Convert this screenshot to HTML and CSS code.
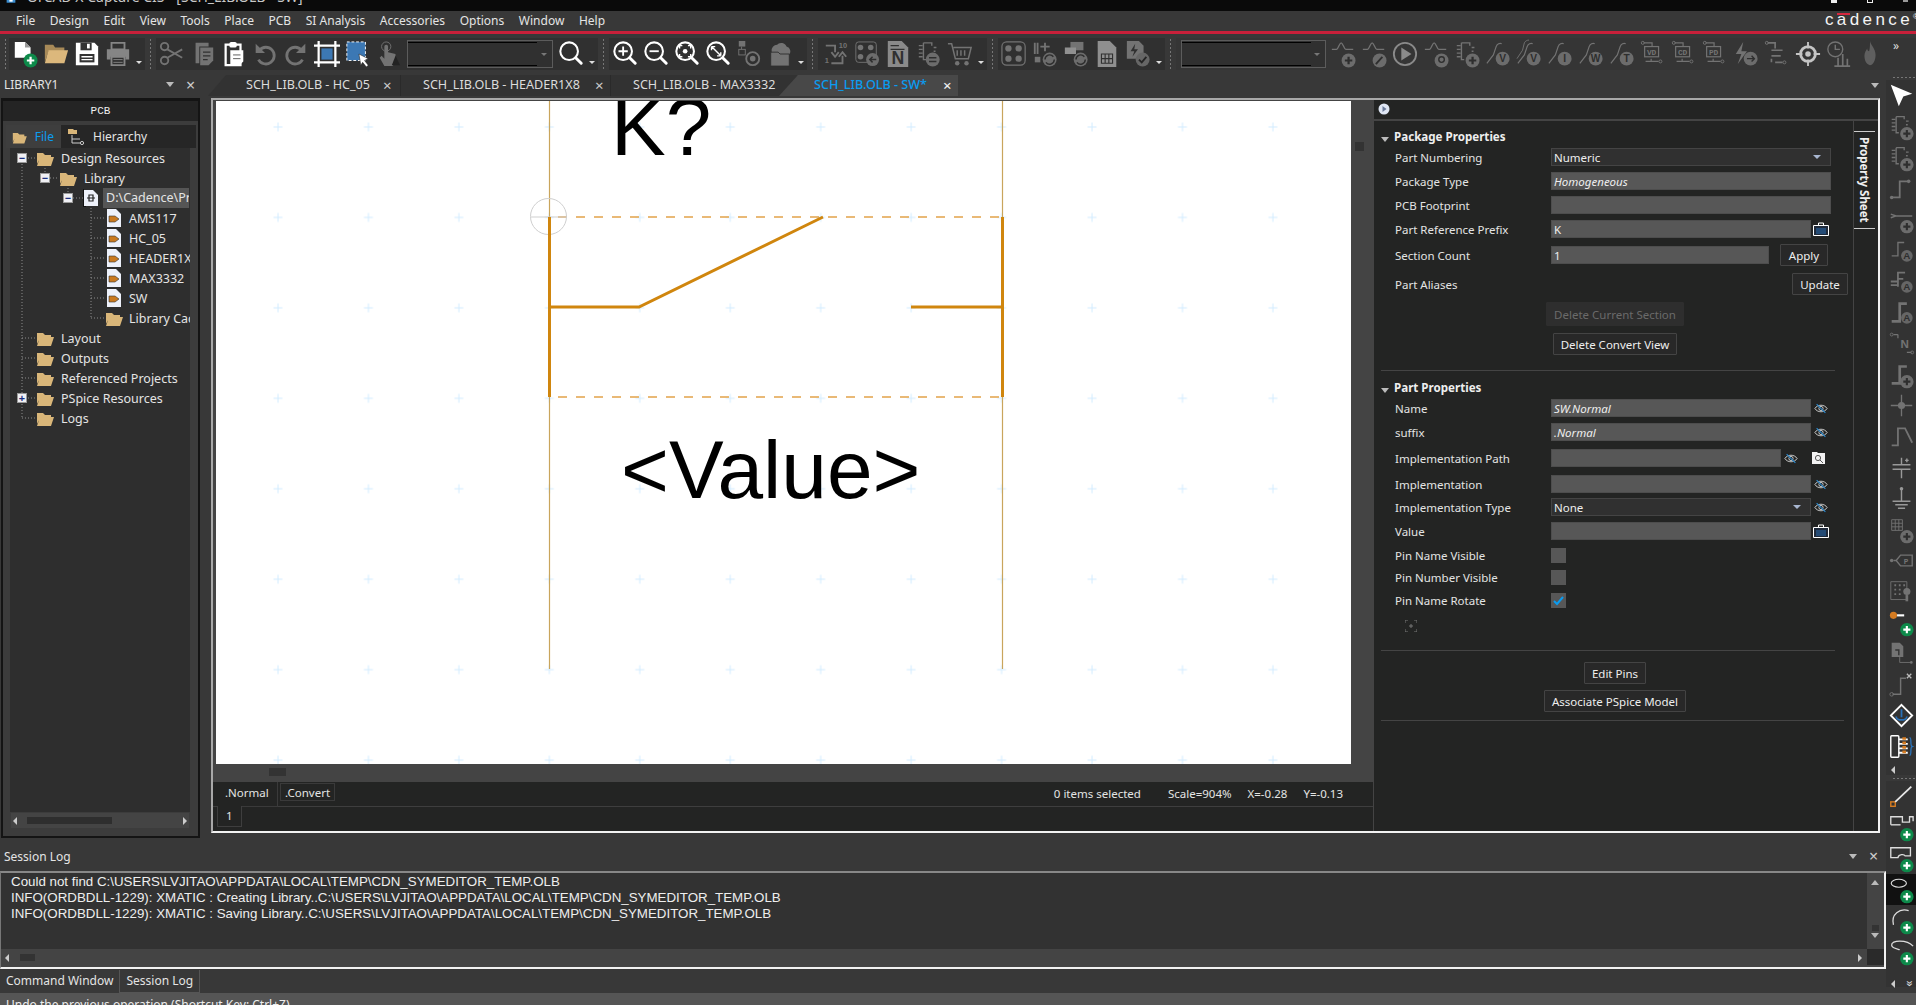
FILE: index.html
```html
<!DOCTYPE html>
<html lang="en">
<head>
<meta charset="UTF-8">
<title>OrCAD X Capture CIS - [SCH_LIB.OLB - SW]</title>
<link rel="stylesheet" href="styles.css">
</head>
<body>

<svg class="defs" width="0" height="0">
  <defs>
    <g id="b-green"><circle cx="20" cy="22" r="7.5" fill="#0d8a4a"/><path d="M20 18v8M16 22h8" stroke="#fff" stroke-width="2.4"/></g>
    <g id="b-gray"><circle cx="20" cy="22" r="7.5" fill="#6c6c6c"/><path d="M20 18v8M16 22h8" stroke="#2e2e2e" stroke-width="2.4"/></g>
    <g id="b-circle"><circle cx="20" cy="22" r="7.5" fill="#6c6c6c"/></g>
    <path id="wave" d="M2 10h5c2 0 3-7 5-7s3 7 5 7h8" fill="none" stroke="currentColor" stroke-width="1.4"/>
    <path id="probe" d="M2 25l7-9 3-9c1-3 4-4 6-3" fill="none" stroke="currentColor" stroke-width="1.3"/>
    <path id="chip" d="M8 3h9v3M8 3v18h3M3 6h4M3 10h4M3 14h4M3 18h4M19 8h3M19 12h2" fill="none" stroke="currentColor" stroke-width="1.5"/>
    <g id="lens"><circle cx="12" cy="12" r="9.5" fill="none" stroke="currentColor" stroke-width="2.2"/><path d="M19 19l6 6" stroke="currentColor" stroke-width="3.2" stroke-linecap="round"/></g>
    <path id="folder" d="M1 4h6l2 2h6v3H4L1 15zM4 8h14l-3 9H1z" fill="#d9b679"/>
    <g id="vd-box"><path d="M4 3h5M9 3h4v4M6 23h6v-3M12 23h8" fill="none" stroke="currentColor" stroke-width="1.3"/><circle cx="3" cy="3" r="1.6" fill="none" stroke="currentColor"/><circle cx="22" cy="23" r="1.6" fill="none" stroke="currentColor"/><rect x="5" y="7" width="15" height="11" fill="none" stroke="currentColor" stroke-width="1.3"/></g>
    <pattern id="gridmark" x="274" y="121" width="90.45" height="90.45" patternUnits="userSpaceOnUse">
      <path d="M5 .5v9M.5 5h9" stroke="#d2ecff" stroke-width="1"/>
    </pattern>
  </defs>
</svg>

<div class="app">
  <div class="titlebar">
    <svg class="title-icon" viewBox="0 0 16 11"><rect x="0" y="0" width="16" height="5" fill="#3b8ed0"/><rect x="5" y="0" width="6" height="3" fill="#fff"/></svg>
    <span class="title-text">OrCAD X Capture CIS - [SCH_LIB.OLB - SW]</span>
    <span class="win-btns"><i class="win-min"></i><i class="win-max"></i><i class="win-close"></i></span>
  </div>

  <div class="menubar">
    <span>File</span><span>Design</span><span>Edit</span><span>View</span><span>Tools</span><span>Place</span><span>PCB</span><span>SI Analysis</span><span>Accessories</span><span>Options</span><span>Window</span><span>Help</span>
    <span class="logo">c<b>a</b>dence<sup>®</sup></span>
  </div>

  <div class="toolbar">
    <i class="grip first"></i>
    <div class="tb-group">
      <span class="tb on"><svg viewBox="0 0 28 30"><path d="M3 2h11l6 6v11H3z" fill="#fff"/><path d="M14 2v6h6" fill="#999"/><use href="#b-green"/></svg></span>
      <span class="tb on"><svg viewBox="0 0 28 30"><path d="M2 5h9l2 3h10v4H6L2 24z" fill="#a88a58"/><path d="M6 11h21l-4 14H2z" fill="#dcb87c"/></svg></span>
      <span class="tb on"><svg viewBox="0 0 28 30"><path d="M2 3h20l4 4v20H2z" fill="#fff"/><rect x="7" y="3" width="12" height="8" fill="#333"/><rect x="14" y="4" width="3" height="5" fill="#fff"/><rect x="6" y="15" width="16" height="9" fill="#333"/><path d="M8 18h12M8 21h12" stroke="#fff" stroke-width="1.5"/></svg></span>
      <span class="tb off"><svg viewBox="0 0 28 30"><path d="M7 3h14v7H7z" fill="none" stroke="#858585" stroke-width="2"/><path d="M2 10h24v11h-4v-3H6v3H2z" fill="#858585"/><path d="M7 18h14v9H7z" fill="none" stroke="#858585" stroke-width="2"/><path d="M9 21h10M9 24h10" stroke="#858585"/></svg></span>
      <span class="dd"></span>
    </div>
    <i class="grip"></i>
    <div class="tb-group">
      <span class="tb off"><svg viewBox="0 0 28 30"><circle cx="6" cy="7" r="4" fill="none" stroke="currentColor" stroke-width="2"/><circle cx="6" cy="22" r="4" fill="none" stroke="currentColor" stroke-width="2"/><path d="M9 10l16 9M9 19l16-9" stroke="currentColor" stroke-width="2"/></svg></span>
      <span class="tb off"><svg viewBox="0 0 28 30"><path d="M6 3h14v4H10v18H6z" fill="currentColor"/><path d="M11 8h14v14l-5 5h-9z" fill="currentColor"/><path d="M14 13h8M14 17h8M14 21h5" stroke="#303030" stroke-width="1.5"/></svg></span>
      <span class="tb on"><svg viewBox="0 0 28 30"><path d="M5 5h16v22H5z" fill="none" stroke="#fff" stroke-width="2.4"/><rect x="9" y="2" width="8" height="6" rx="2" fill="#fff"/><path d="M10 11h14v12l-5 5h-9z" fill="#fff"/><path d="M13 16h8M13 20h8" stroke="#555"/></svg></span>
      <span class="tb off"><svg viewBox="0 0 28 30"><path d="M8 11a9 9 0 1 1 -1 10" fill="none" stroke="currentColor" stroke-width="3"/><path d="M4 4v10h10z" fill="currentColor"/></svg></span>
      <span class="tb off"><svg viewBox="0 0 28 30"><path d="M20 11a9 9 0 1 0 1 10" fill="none" stroke="currentColor" stroke-width="3"/><path d="M24 4v10H14z" fill="currentColor"/></svg></span>
      <span class="tb on"><svg viewBox="0 0 28 30"><path d="M5 1v28M23 1v28M0 6h28M0 24h28" stroke="#fff" stroke-width="2.4"/><rect x="8" y="9" width="12" height="12" fill="#3c78b4"/></svg></span>
      <span class="tb on"><svg viewBox="0 0 28 30"><rect x="2" y="2" width="20" height="20" fill="#3c78b4" stroke="#fff" stroke-dasharray="3 2"/><path d="M15 15l10 5-4 2 4 5-2 2-4-5-2 3z" fill="#fff" stroke="#222" stroke-width=".6"/></svg></span>
      <span class="tb off"><svg viewBox="0 0 28 30"><path d="M9 14V7a2 2 0 0 1 4 0v6l8 2v8l-3 5H9l-5-9 2-2 3 3z" fill="currentColor"/><circle cx="11" cy="7" r="5" fill="none" stroke="currentColor"/><path d="M21 17l5 10H17z" fill="#222"/></svg></span>
      <span class="combo"><i></i></span>
      <span class="tb on"><svg viewBox="0 0 28 30"><use href="#lens"/></svg></span>
      <span class="dd"></span>
    </div>
    <i class="grip"></i>
    <div class="tb-group">
      <span class="tb on"><svg viewBox="0 0 28 30"><use href="#lens"/><path d="M12 7v10M7 12h10" stroke="#fff" stroke-width="2"/></svg></span>
      <span class="tb on"><svg viewBox="0 0 28 30"><use href="#lens"/><path d="M7 12h10" stroke="#fff" stroke-width="2"/></svg></span>
      <span class="tb on"><svg viewBox="0 0 28 30"><use href="#lens"/><path d="M6 9V6h3M15 6h3v3M18 15v3h-3M9 18H6v-3" fill="none" stroke="#fff" stroke-width="1.5"/><circle cx="12" cy="12" r="2.5" fill="#fff"/></svg></span>
      <span class="tb on"><svg viewBox="0 0 28 30"><use href="#lens"/><path d="M7 7l10 10M7 7h4M7 7v4M17 17h-4M17 17v-4" fill="none" stroke="#fff" stroke-width="1.5"/></svg></span>
      <span class="tb off"><svg viewBox="0 0 28 30"><rect x="3" y="1" width="7" height="6" fill="currentColor"/><rect x="3" y="10" width="7" height="6" fill="none" stroke="currentColor"/><path d="M6 7v3" stroke="currentColor"/><circle cx="18" cy="20" r="7" fill="none" stroke="currentColor" stroke-width="2"/><circle cx="18" cy="20" r="3" fill="currentColor"/></svg></span>
      <span class="tb off"><svg viewBox="0 0 28 30"><path d="M5 12a6 6 0 0 1 6-7 6 6 0 0 1 10 2 5 5 0 0 1 2 9H5z" fill="currentColor"/><path d="M4 13h8l2 2h10v13H4z" fill="currentColor" stroke="#303030"/></svg></span>
      <span class="dd"></span>
    </div>
    <i class="grip"></i>
    <div class="tb-group pad2">
      <span class="tb off"><svg viewBox="0 0 28 30"><path d="M3 6h10v7M9 13l4 5 4-5M9 25h12v-8M17 18l4-5 4 5" fill="none" stroke="currentColor" stroke-width="2"/><text x="17" y="9" class="svg-num">10</text><text x="2" y="25" class="svg-num">1</text></svg></span>
      <span class="tb off"><svg viewBox="0 0 28 30"><rect x="2" y="2" width="22" height="22" rx="3" fill="none" stroke="currentColor"/><circle cx="7" cy="8" r="3" fill="currentColor"/><circle cx="18" cy="8" r="3" fill="currentColor"/><circle cx="7" cy="18" r="3" fill="currentColor"/><circle cx="20" cy="21" r="7" fill="#6c6c6c"/><path d="M24 21h-7m3-3l-3 3 3 3" fill="none" stroke="#2e2e2e" stroke-width="1.6"/></svg></span>
      <span class="tb off"><svg viewBox="0 0 28 30"><path d="M3 1h15l7 7v21H3z" fill="#8a8a8a"/><text x="7" y="26" class="svg-big">N</text><path d="M6 6h9M6 10h15" stroke="#303030" stroke-width="1.5"/></svg></span>
      <span class="tb off"><svg viewBox="0 0 28 30"><use href="#chip"/><circle cx="18" cy="21" r="7.5" fill="#6c6c6c"/><path d="M14 19h8M22 23h-8" stroke="#2e2e2e" stroke-width="1.6"/></svg></span>
      <span class="tb off"><svg viewBox="0 0 28 30"><path d="M1 4h4l4 16h14l3-12H7" fill="none" stroke="currentColor" stroke-width="1.6"/><path d="M11 11v6M15 11v6M19 11v6" stroke="currentColor" stroke-width="1.6"/><circle cx="11" cy="25" r="2.4" fill="currentColor"/><circle cx="21" cy="25" r="2.4" fill="currentColor"/></svg></span>
      <span class="dd"></span>
    </div>
    <i class="grip"></i>
    <div class="tb-group">
      <span class="tb off"><svg viewBox="0 0 28 30"><rect x="1" y="2" width="25" height="25" rx="5" fill="none" stroke="currentColor" stroke-width="1.3"/><circle cx="8" cy="9" r="3.4" fill="currentColor"/><circle cx="19" cy="9" r="3.4" fill="currentColor"/><circle cx="8" cy="20" r="3.4" fill="currentColor"/><circle cx="19" cy="20" r="3.4" fill="currentColor"/></svg></span>
      <span class="tb off"><svg viewBox="0 0 28 30"><path d="M3 3v12M6 3v12M14 3v9M9 7h10" stroke="currentColor" stroke-width="2"/><rect x="3" y="18" width="6" height="6" fill="currentColor"/><circle cx="19" cy="21" r="7.5" fill="#6c6c6c"/><path d="M14 21a5 5 0 0 1 9-3M24 21a5 5 0 0 1-9 3" fill="none" stroke="#2e2e2e" stroke-width="1.5"/></svg></span>
      <span class="tb off"><svg viewBox="0 0 28 30"><rect x="8" y="2" width="14" height="9" fill="currentColor"/><rect x="2" y="8" width="12" height="7" fill="#909090"/><circle cx="19" cy="21" r="7.5" fill="#6c6c6c"/><path d="M14 21a5 5 0 0 1 9-3M24 21a5 5 0 0 1-9 3" fill="none" stroke="#2e2e2e" stroke-width="1.5"/></svg></span>
      <span class="tb off"><svg viewBox="0 0 28 30"><path d="M4 1h13l7 7v21H4z" fill="#8f8f8f"/><path d="M8 15h12v10H8zM8 20h12M12 15v10M16 15v10" fill="none" stroke="#303030" stroke-width="1.2"/></svg></span>
      <span class="tb off"><svg viewBox="0 0 28 30"><path d="M2 1h13l5 5v14H2z" fill="currentColor"/><path d="M11 4l-5 8h4l-2 6 6-8h-4z" fill="#303030"/><circle cx="19" cy="21" r="7.5" fill="#666"/><path d="M15 21l3 3 5-6" fill="none" stroke="#252525" stroke-width="2"/></svg></span>
      <span class="dd"></span>
    </div>
    <i class="grip"></i>
    <div class="tb-group grow">
      <span class="combo alt"><i></i></span>
      <span class="tb off"><svg viewBox="0 0 28 30"><use href="#wave"/><use href="#b-gray"/></svg></span>
      <span class="tb off"><svg viewBox="0 0 28 30"><use href="#wave"/><use href="#b-circle"/><path d="M16 26l7-8" stroke="#2e2e2e" stroke-width="2"/></svg></span>
      <span class="tb off"><svg viewBox="0 0 28 30"><circle cx="14" cy="15" r="12" fill="none" stroke="#8a8a8a" stroke-width="2"/><path d="M10 8v14l11-7z" fill="#8a8a8a"/></svg></span>
      <span class="tb off"><svg viewBox="0 0 28 30"><use href="#wave"/><use href="#b-circle"/><circle cx="20" cy="21" r="3" fill="none" stroke="#2e2e2e" stroke-width="1.5"/></svg></span>
      <span class="tb off"><svg viewBox="0 0 28 30"><use href="#chip"/><use href="#b-gray"/></svg></span>
      <span class="tb off"><svg viewBox="0 0 28 30"><use href="#probe"/><circle cx="19" cy="20" r="7.5" fill="#6c6c6c"/><text x="19" y="24" class="svg-badge">V</text></svg></span>
      <span class="tb off"><svg viewBox="0 0 28 30"><use href="#probe"/><path d="M1 20l6-9 2-8c1-2 3-3 5-3" fill="none" stroke="currentColor"/><circle cx="19" cy="20" r="7.5" fill="#6c6c6c"/><text x="19" y="24" class="svg-badge">V</text></svg></span>
      <span class="tb off"><svg viewBox="0 0 28 30"><use href="#probe"/><circle cx="19" cy="20" r="7.5" fill="#6c6c6c"/><text x="19" y="24" class="svg-badge">I</text></svg></span>
      <span class="tb off"><svg viewBox="0 0 28 30"><use href="#probe"/><circle cx="19" cy="20" r="7.5" fill="#6c6c6c"/><text x="19" y="24" class="svg-badge">W</text></svg></span>
      <span class="tb off"><svg viewBox="0 0 28 30"><use href="#probe"/><circle cx="19" cy="20" r="7.5" fill="#6c6c6c"/><text x="19" y="24" class="svg-badge">T</text></svg></span>
      <span class="tb off"><svg viewBox="0 0 28 30"><use href="#vd-box"/><text x="12.5" y="16" class="svg-tag">VD</text></svg></span>
      <span class="tb off"><svg viewBox="0 0 28 30"><use href="#vd-box"/><text x="12.5" y="16" class="svg-tag">CD</text></svg></span>
      <span class="tb off"><svg viewBox="0 0 28 30"><use href="#vd-box"/><text x="12.5" y="16" class="svg-tag">PD</text></svg></span>
      <span class="tb off"><svg viewBox="0 0 28 30"><path d="M11 2L3 15h6l-4 11 10-14H9z" fill="currentColor"/><circle cx="19" cy="20" r="7.5" fill="#6c6c6c"/><path d="M15 20h8m-3-3l3 3-3 3" fill="none" stroke="#2e2e2e" stroke-width="1.5"/></svg></span>
      <span class="tb off"><svg viewBox="0 0 28 30"><path d="M4 3h8v6M12 24h8M8 11h12M8 17h10M8 24v-4" fill="none" stroke="currentColor" stroke-width="1.8"/><circle cx="3" cy="3" r="1.6" fill="none" stroke="currentColor"/><circle cx="22" cy="24" r="1.6" fill="none" stroke="currentColor"/></svg></span>
      <span class="tb on dim"><svg viewBox="0 0 28 30"><circle cx="14" cy="15" r="8" fill="none" stroke="currentColor" stroke-width="3"/><circle cx="14" cy="15" r="3" fill="currentColor"/><path d="M14 2v7M14 21v7M1 15h7M20 15h7" stroke="currentColor" stroke-width="2"/></svg></span>
      <span class="tb off"><svg viewBox="0 0 28 30"><circle cx="10" cy="10" r="8" fill="none" stroke="currentColor" stroke-width="1.5"/><path d="M10 5v5h5" fill="none" stroke="currentColor" stroke-width="1.5"/><path d="M13 27V19M18 27V15M23 27V20M9 28h17" stroke="currentColor" stroke-width="1.8"/></svg></span>
      <span class="tb off"><svg viewBox="0 0 28 30"><path d="M14 1c1 5 6 8 6 15 0 6-3 11-6 11s-6-4-6-10c0-4 2-6 3-8 0 2 1 3 2 3 1-3 1-7 1-11z" fill="#5f5f5f"/></svg></span>
      <span class="chevrons">»</span>
    </div>
  </div>

  <div class="workspace">
    <div class="center">
      <div class="upper">
        <div class="left">
          <div class="dock-head">
            <span>LIBRARY1</span>
            <i class="tri"></i>
            <span class="x">×</span>
          </div>
          <div class="panel">
            <div class="panel-title">PCB</div>
            <div class="panel-body">
              <div class="panel-tabs">
                <div class="ptab active">
                  <svg viewBox="0 0 18 18"><use href="#folder"/></svg><span>File</span>
                </div>
                <div class="ptab">
                  <svg viewBox="0 0 18 18"><path d="M1 1h5l1 1h3v4H1z" fill="#d9b679"/><path d="M5 7v8h8M5 11h8" fill="none" stroke="#ccc"/><circle cx="15" cy="15" r="1.6" fill="none" stroke="#ccc"/></svg><span>Hierarchy</span>
                </div>
              </div>
              <div class="tree">
                <svg class="tree-lines" width="180" height="300" viewBox="10 148 180 300">
                  <path d="M22 158v260M22 158h14M22 338h14M22 358h14M22 378h14M22 398h14M22 418h14M45 168v10h14M68 188v10h15M91 205v113M91 218h15M91 238h15M91 258h15M91 278h15M91 298h15M91 318h14" fill="none" stroke="#8a8a8a" stroke-dasharray="1 2"/>
                </svg>
                <div class="node l0"><i class="toggle">−</i><svg class="fold" viewBox="0 0 18 18"><use href="#folder"/></svg><span>Design Resources</span></div>
                <div class="node l1"><i class="toggle">−</i><svg class="fold" viewBox="0 0 18 18"><use href="#folder"/></svg><span>Library</span></div>
                <div class="node l2"><i class="toggle">−</i><svg class="file" viewBox="0 0 16 18"><path d="M1 1h9l5 5v11H1z" fill="#eef1fa"/><path d="M0 0v18h3" fill="none" stroke="#111" stroke-width="2"/><path d="M4 9h8M6 6h4v6H6z" fill="none" stroke="#222" stroke-width="1.2"/></svg><span class="sel">D:\Cadence\Projects\SCH_LIB.OLB</span></div>
                <div class="node l3"><svg class="file" viewBox="0 0 14 18"><path d="M0 0h9l5 5v13H0z" fill="#eef1fa"/><path d="M2 7h6l4 3-4 3H2z" fill="#c9791f" stroke="#333" stroke-width=".6"/></svg><span>AMS117</span></div>
                <div class="node l3"><svg class="file" viewBox="0 0 14 18"><path d="M0 0h9l5 5v13H0z" fill="#eef1fa"/><path d="M2 7h6l4 3-4 3H2z" fill="#c9791f" stroke="#333" stroke-width=".6"/></svg><span>HC_05</span></div>
                <div class="node l3"><svg class="file" viewBox="0 0 14 18"><path d="M0 0h9l5 5v13H0z" fill="#eef1fa"/><path d="M2 7h6l4 3-4 3H2z" fill="#c9791f" stroke="#333" stroke-width=".6"/></svg><span>HEADER1X8</span></div>
                <div class="node l3"><svg class="file" viewBox="0 0 14 18"><path d="M0 0h9l5 5v13H0z" fill="#eef1fa"/><path d="M2 7h6l4 3-4 3H2z" fill="#c9791f" stroke="#333" stroke-width=".6"/></svg><span>MAX3332</span></div>
                <div class="node l3"><svg class="file" viewBox="0 0 14 18"><path d="M0 0h9l5 5v13H0z" fill="#eef1fa"/><path d="M2 7h6l4 3-4 3H2z" fill="#c9791f" stroke="#333" stroke-width=".6"/></svg><span>SW</span></div>
                <div class="node l3 cache"><svg class="fold" viewBox="0 0 18 18"><use href="#folder"/></svg><span>Library Cache</span></div>
                <div class="node l0"><i class="toggle none"></i><svg class="fold" viewBox="0 0 18 18"><use href="#folder"/></svg><span>Layout</span></div>
                <div class="node l0"><i class="toggle none"></i><svg class="fold" viewBox="0 0 18 18"><use href="#folder"/></svg><span>Outputs</span></div>
                <div class="node l0"><i class="toggle none"></i><svg class="fold" viewBox="0 0 18 18"><use href="#folder"/></svg><span>Referenced Projects</span></div>
                <div class="node l0"><i class="toggle">+</i><svg class="fold" viewBox="0 0 18 18"><use href="#folder"/></svg><span>PSpice Resources</span></div>
                <div class="node l0"><i class="toggle none"></i><svg class="fold" viewBox="0 0 18 18"><use href="#folder"/></svg><span>Logs</span></div>
              </div>
              <div class="hbar tree-bar"><i class="arr-l"></i><i class="thumb"></i><i class="arr-r"></i></div>
            </div>
          </div>
        </div>

        <div class="docs">
          <div class="doc-tabs">
            <div class="dtab first"><span>SCH_LIB.OLB - HC_05</span><em>×</em></div>
            <div class="dtab second"><span>SCH_LIB.OLB - HEADER1X8</span><em>×</em></div>
            <div class="dtab third"><span>SCH_LIB.OLB - MAX3332</span><em>×</em></div>
            <div class="dtab active"><span>SCH_LIB.OLB - SW*</span><em>×</em></div>
            <i class="tri right"></i>
          </div>
          <div class="frame">
            <div class="editor">
              <div class="canvas-row">
                <svg class="canvas" width="1135" height="663" viewBox="217 100 1135 663">
                  <rect x="217" y="100" width="1135" height="663" fill="#fff"/>
                  <rect x="217" y="100" width="1135" height="663" fill="url(#gridmark)"/>
                  <path d="M550.5 100v568M1003.5 100v568" stroke="#c9a55c" stroke-width="1.2"/>
                  <path d="M550 216H1003M550 396H1003" stroke="#e2a24a" stroke-width="1.3" stroke-dasharray="9 9" stroke-dashoffset="-9"/>
                  <circle cx="549.5" cy="215.5" r="18" fill="none" stroke="#cfcfcf"/>
                  <path d="M532 216h36" stroke="#cfcfcf"/>
                  <path d="M550.5 216v180M1003.5 216v180M550 306h90l184-90M912 306h91" fill="none" stroke="#d0860e" stroke-width="3"/>
                  <text x="612" y="154" class="sym-text">K?</text>
                  <text x="622" y="497" class="sym-text">&lt;Value&gt;</text>
                </svg>
                <div class="vbar"><i></i></div>
              </div>
              <div class="hbar canvas-bar"><i class="thumb"></i></div>
              <div class="view-tabs">
                <span class="vtab active">.Normal</span>
                <span class="vtab">.Convert</span>
                <div class="status">
                  <span>0 items selected</span><span>Scale=904%</span><span>X=-0.28</span><span>Y=-0.13</span>
                </div>
              </div>
              <div class="pages"><span class="page">1</span></div>
            </div>

            <div class="props">
              <div class="props-head">
                <svg viewBox="0 0 12 12"><circle cx="6" cy="6" r="5.5" fill="#dfe6f3"/><path d="M4.5 3v6l4-3z" fill="#6a7a99"/></svg>
              </div>
              <div class="props-body">
                <div class="props-main">
                  <div class="sect"><i class="sect-tri"></i>Package Properties</div>
                  <div class="row first">
                    <label>Part Numbering</label>
                    <div class="field select full">Numeric<i></i></div>
                  </div>
                  <div class="row">
                    <label>Package Type</label>
                    <div class="field full italic">Homogeneous</div>
                  </div>
                  <div class="row">
                    <label>PCB Footprint</label>
                    <div class="field full"></div>
                  </div>
                  <div class="row">
                    <label>Part Reference Prefix</label>
                    <div class="field wide">K</div>
                    <svg class="bag" viewBox="0 0 16 14"><path d="M.5 3.5h15v10H.5z" fill="#1f2a3a" stroke="#fff"/><path d="M5.5 3V1h5v2" fill="none" stroke="#fff"/><path d="M3 7h10M3 9h10M3 11h10" stroke="#2a6db0"/></svg>
                  </div>
                  <div class="row btn-row">
                    <label>Section Count</label>
                    <div class="field short">1</div>
                    <button class="btn apply">Apply</button>
                  </div>
                  <div class="row btn-row gap7">
                    <label>Part Aliases</label>
                    <button class="btn update">Update</button>
                  </div>
                  <div class="actions">
                    <button class="btn tall" disabled>Delete Current Section</button>
                    <button class="btn">Delete Convert View</button>
                  </div>
                  <hr class="sep">
                  <div class="sect second"><i class="sect-tri"></i>Part Properties</div>
                  <div class="row name-row">
                    <label>Name</label>
                    <div class="field wide italic">SW.Normal</div>
                    <svg class="eye" viewBox="0 0 16 12"><path d="M1 6c3-5 11-5 14 0-3 5-11 5-14 0z" fill="none" stroke="#ddd"/><circle cx="8" cy="6" r="2.4" fill="none" stroke="#ddd"/><path d="M3 1l10 10" stroke="#2a8ad0" stroke-width="1.2"/></svg>
                  </div>
                  <div class="row">
                    <label>suffix</label>
                    <div class="field wide italic">.Normal</div>
                    <svg class="eye" viewBox="0 0 16 12"><path d="M1 6c3-5 11-5 14 0-3 5-11 5-14 0z" fill="none" stroke="#ddd"/><circle cx="8" cy="6" r="2.4" fill="none" stroke="#ddd"/><path d="M3 1l10 10" stroke="#2a8ad0" stroke-width="1.2"/></svg>
                  </div>
                  <div class="row gap8">
                    <label>Implementation Path</label>
                    <div class="field path"></div>
                    <svg class="eye" viewBox="0 0 16 12"><path d="M1 6c3-5 11-5 14 0-3 5-11 5-14 0z" fill="none" stroke="#ddd"/><circle cx="8" cy="6" r="2.4" fill="none" stroke="#ddd"/><path d="M3 1l10 10" stroke="#2a8ad0" stroke-width="1.2"/></svg>
                    <svg class="browse" viewBox="0 0 13 12"><path d="M0 0h5l1 1h7v11H0z" fill="#f2f2f2"/><circle cx="6" cy="6" r="2.6" fill="none" stroke="#555"/><path d="M8 8l3 3" stroke="#555"/></svg>
                  </div>
                  <div class="row gap8">
                    <label>Implementation</label>
                    <div class="field wide"></div>
                    <svg class="eye" viewBox="0 0 16 12"><path d="M1 6c3-5 11-5 14 0-3 5-11 5-14 0z" fill="none" stroke="#ddd"/><circle cx="8" cy="6" r="2.4" fill="none" stroke="#ddd"/><path d="M3 1l10 10" stroke="#2a8ad0" stroke-width="1.2"/></svg>
                  </div>
                  <div class="row gap5">
                    <label>Implementation Type</label>
                    <div class="field select wide">None<i></i></div>
                    <svg class="eye" viewBox="0 0 16 12"><path d="M1 6c3-5 11-5 14 0-3 5-11 5-14 0z" fill="none" stroke="#ddd"/><circle cx="8" cy="6" r="2.4" fill="none" stroke="#ddd"/><path d="M3 1l10 10" stroke="#2a8ad0" stroke-width="1.2"/></svg>
                  </div>
                  <div class="row">
                    <label>Value</label>
                    <div class="field wide"></div>
                    <svg class="bag" viewBox="0 0 16 14"><path d="M.5 3.5h15v10H.5z" fill="#1f2a3a" stroke="#fff"/><path d="M5.5 3V1h5v2" fill="none" stroke="#fff"/><path d="M3 7h10M3 9h10M3 11h10" stroke="#2a6db0"/></svg>
                  </div>
                  <div class="row check gap8"><label>Pin Name Visible</label><span class="box"></span></div>
                  <div class="row check gap7"><label>Pin Number Visible</label><span class="box"></span></div>
                  <div class="row check gap8"><label>Pin Name Rotate</label><span class="box"><svg viewBox="0 0 15 15"><path d="M3 8l3 3 6-7" fill="none" stroke="#0a9cf0" stroke-width="2"/></svg></span></div>
                  <svg class="focus" viewBox="0 0 12 12"><path d="M0 3V0h3M9 0h3v3M12 9v3H9M3 12H0V9M6 4v4M4 6h4" fill="none" stroke="#777"/></svg>
                  <hr class="sep low">
                  <div class="actions lower">
                    <button class="btn">Edit Pins</button>
                    <button class="btn">Associate PSpice Model</button>
                  </div>
                  <hr class="sep end">
                </div>
                <div class="side-tab"><span>Property Sheet</span></div>
              </div>
            </div>
          </div>
        </div>
      </div>

      <div class="session">
        <div class="session-head">
          <span>Session Log</span>
          <i class="tri"></i>
          <span class="x">×</span>
        </div>
        <div class="log-frame">
          <div class="log-main">
            <div class="log-text">
              <div>Could not find C:\USERS\LVJITAO\APPDATA\LOCAL\TEMP\CDN_SYMEDITOR_TEMP.OLB</div>
              <div>INFO(ORDBDLL-1229): XMATIC : Creating Library..C:\USERS\LVJITAO\APPDATA\LOCAL\TEMP\CDN_SYMEDITOR_TEMP.OLB</div>
              <div>INFO(ORDBDLL-1229): XMATIC : Saving Library..C:\USERS\LVJITAO\APPDATA\LOCAL\TEMP\CDN_SYMEDITOR_TEMP.OLB</div>
            </div>
            <div class="log-vbar"><i class="arr-u"></i><i class="thumb"></i><i class="arr-d"></i></div>
          </div>
          <div class="log-hbar">
            <i class="arr-l"></i><i class="thumb"></i><i class="arr-r"></i><span class="corner"></span>
          </div>
        </div>
        <div class="session-tabs">
          <span class="stab">Command Window</span>
          <span class="stab active">Session Log</span>
        </div>
      </div>
    </div>

    <div class="dock">
      <i class="vgrip"></i>
      <div class="dock-group">
        <span class="dk on"><svg viewBox="0 0 28 28"><path d="M2 2l24 10-10 3-5 11z" fill="#fff"/></svg></span>
        <span class="dk off"><svg viewBox="0 0 28 28"><use href="#chip"/><use href="#b-gray"/></svg></span>
        <span class="dk off"><svg viewBox="0 0 28 28"><use href="#chip"/><use href="#b-gray"/></svg></span>
        <span class="dk off"><svg viewBox="0 0 28 28"><path d="M3 24h9V6h9" fill="none" stroke="currentColor" stroke-width="2"/><circle cx="3" cy="24" r="2" fill="currentColor"/><circle cx="22" cy="6" r="2" fill="currentColor"/></svg></span>
        <span class="dk off"><svg viewBox="0 0 28 28"><path d="M2 8l6 2h18M2 12l6-2" fill="none" stroke="currentColor" stroke-width="1.6"/><use href="#b-gray"/></svg></span>
        <span class="dk off"><svg viewBox="0 0 28 28"><path d="M3 20h7V5h7" fill="none" stroke="currentColor" stroke-width="1.5"/><circle cx="20" cy="20" r="6.5" fill="#666"/><text x="20" y="24" class="svg-badge">A</text></svg></span>
        <span class="dk off"><svg viewBox="0 0 28 28"><path d="M2 18h8M2 14h8M10 20V4h8M10 11h6" fill="none" stroke="currentColor" stroke-width="2"/><circle cx="20" cy="20" r="6.5" fill="#666"/><text x="20" y="24" class="svg-badge">A</text></svg></span>
        <span class="dk off"><svg viewBox="0 0 28 28"><path d="M3 24h9V4h8" fill="none" stroke="currentColor" stroke-width="3"/><circle cx="20" cy="20" r="6.5" fill="#666"/><text x="20" y="24" class="svg-badge">A</text></svg></span>
        <span class="dk off"><svg viewBox="0 0 28 28"><path d="M5 4h5M10 4v4M20 24h5" fill="none" stroke="currentColor" stroke-width="1.4"/><text x="13" y="19" class="svg-big small">N</text><circle cx="3" cy="4" r="1.6" fill="none" stroke="currentColor"/><circle cx="26" cy="24" r="1.6" fill="none" stroke="currentColor"/></svg></span>
        <span class="dk off"><svg viewBox="0 0 28 28"><path d="M3 24h9V5h8" fill="none" stroke="currentColor" stroke-width="3"/><use href="#b-gray"/></svg></span>
        <span class="dk off"><svg viewBox="0 0 28 28"><path d="M14 2v24M2 14h24" stroke="currentColor" stroke-width="1.5"/><circle cx="14" cy="14" r="4" fill="currentColor"/></svg></span>
        <span class="dk off"><svg viewBox="0 0 28 28"><path d="M3 24h7V5h8l8 16" fill="none" stroke="currentColor" stroke-width="2"/></svg></span>
        <span class="dk off"><svg viewBox="0 0 28 28"><path d="M4 11h20M4 16h20M14 3v8M14 16v10M20 4v4M18 6h4" fill="none" stroke="#999" stroke-width="1.6"/></svg></span>
        <span class="dk off"><svg viewBox="0 0 28 28"><path d="M14 2v15M4 17h20M7 21h14M10 25h8" fill="none" stroke="#999" stroke-width="1.6"/><circle cx="14" cy="3" r="2" fill="#999"/></svg></span>
        <span class="dk off"><svg viewBox="0 0 28 28"><path d="M3 3h12v12H3zM3 7h12M3 11h12M7 3v12M11 3v12" fill="none" stroke="currentColor"/><use href="#b-gray"/></svg></span>
        <span class="dk off"><svg viewBox="0 0 28 28"><circle cx="3" cy="14" r="2" fill="currentColor"/><path d="M5 14h3l5-6h13v12H13l-5-6" fill="none" stroke="currentColor" stroke-width="1.6"/><text x="19" y="18" class="svg-tag">P</text></svg></span>
        <span class="dk off"><svg viewBox="0 0 28 28"><path d="M2 3h18v20H2z" fill="none" stroke="currentColor"/><path d="M6 7h2M11 7h2M16 7h2M6 12h2M11 12h2M6 17h2M11 17h2" stroke="currentColor" stroke-width="2"/><circle cx="20" cy="14" r="4" fill="currentColor"/><path d="M20 18v7" stroke="currentColor" stroke-width="3"/></svg></span>
        <span class="dk on"><svg viewBox="0 0 28 28"><circle cx="5" cy="6" r="4" fill="#d67c22"/><path d="M9 6h8" stroke="#fff" stroke-width="2.4"/><use href="#b-green"/></svg></span>
        <span class="dk off"><svg viewBox="0 0 28 28"><path d="M3 2h9l4 4v12H3z" fill="currentColor"/><path d="M7 10h4v6M16 24h8" fill="none" stroke="#333" stroke-width="1.6"/><path d="M12 18v6h12" fill="none" stroke="currentColor"/><circle cx="25" cy="24" r="1.5" fill="currentColor"/></svg></span>
        <span class="dk off"><svg viewBox="0 0 28 28"><path d="M4 25h9V7h6" fill="none" stroke="currentColor" stroke-width="1.6"/><circle cx="3" cy="25" r="2" fill="none" stroke="currentColor"/><path d="M20 2l5 5m0-5l-5 5" stroke="#bbb" stroke-width="1.4"/></svg></span>
        <span class="dk on"><svg viewBox="0 0 28 28"><path d="M14 2l12 12-12 12L2 14z" fill="none" stroke="#fff" stroke-width="2"/><path d="M14 7v9M8 15a6 4 0 0 0 12 0" fill="none" stroke="#2a72b8" stroke-width="2"/></svg></span>
        <span class="dk on"><svg viewBox="0 0 28 28"><rect x="2" y="2" width="9" height="24" rx="1" fill="none" stroke="#fff" stroke-width="1.6"/><path d="M11 6h10M11 11h10M11 16h10M11 21h10" stroke="#fff" stroke-width="2"/><path d="M15 5h4M15 10h4M15 15h4M15 20h4" stroke="#d67c22" stroke-width="3"/><path d="M23 4c3 0 0 9 3 10-3 1 0 10-3 10" fill="none" stroke="#2a72b8" stroke-width="1.5"/></svg></span>
        <i class="dk-more"></i>
      </div>
      <i class="vgrip"></i>
      <div class="dock-group lower-group">
        <span class="dk on"><svg viewBox="0 0 28 28"><rect x="2" y="20" width="5" height="5" fill="none" stroke="#d67c22" stroke-width="1.6"/><path d="M7 20L25 3" stroke="#e8e8e8" stroke-width="2"/></svg></span>
        <span class="dk on"><svg viewBox="0 0 28 28"><path d="M2 11V2h13v6h8V2h4v5" fill="none" stroke="#ddd" stroke-width="1.5"/><path d="M2 11h11" stroke="#ddd" stroke-width="1.5"/><use href="#b-green"/></svg></span>
        <span class="dk on"><svg viewBox="0 0 28 28"><path d="M2 2h22v9h-6c-1-2-7-2-8 2H2z" fill="none" stroke="#ddd" stroke-width="1.5"/><use href="#b-green"/></svg></span>
        <span class="dk on picked"><svg viewBox="0 0 28 28"><ellipse cx="11" cy="7" rx="8.5" ry="4.5" fill="none" stroke="#ddd" stroke-width="1.3"/><use href="#b-green"/></svg></span>
        <span class="dk on"><svg viewBox="0 0 28 28"><path d="M22 3c-10-3-20 4-17 16" fill="none" stroke="#ddd" stroke-width="1.4"/><use href="#b-green"/></svg></span>
        <span class="dk on"><svg viewBox="0 0 28 28"><path d="M27 8C20 0 2 1 3 7c0 3 5 4 9 5" fill="none" stroke="#ddd" stroke-width="1.4"/><use href="#b-green"/></svg></span>
        <div class="dk-foot"><i></i><span>»</span></div>
      </div>
    </div>
  </div>

  <div class="statusbar">Undo the previous operation (Shortcut Key: Ctrl+Z)</div>
</div>

</body>
</html>
```

FILE: styles.css
```css
* { box-sizing: border-box; }

html, body {
  margin: 0;
  height: 100%;
  overflow: hidden;
  background: #383838;
}

body {
  font-family: "Noto Sans", sans-serif;
  font-size: 12px;
  color: #e4e4e4;
}

i, em { font-style: normal; display: block; }

.defs { position: absolute; }

.app {
  width: 1916px;
  height: 1005px;
  display: flex;
  flex-direction: column;
}

/* title + menu */
.titlebar {
  height: 11px;
  flex: none;
  background: #0a0a0a;
  display: flex;
  overflow: hidden;
}
.title-icon { width: 16px; height: 6px; margin-left: 3px; flex: none; }
.title-text {
  margin: -13px 0 0 8px;
  font-size: 14px;
  line-height: 19px;
  height: 19px;
  color: #c8c8c8;
}
.win-btns { margin-left: auto; display: flex; gap: 30px; padding-right: 8px; }
.win-btns i { width: 6px; height: 3px; background: #eee; }
.win-btns .win-max { background: none; border: 1px solid #eee; border-top: 0; height: 3px; }
.win-btns .win-close { width: 5px; height: 2px; background: #999; }

.menubar {
  height: 23px;
  flex: none;
  background: #383838;
  border-bottom: 3px solid #c8203a;
  display: flex;
  align-items: center;
  gap: 14.6px;
  padding-left: 16px;
  line-height: 20px;
}
.logo {
  margin-left: auto;
  margin-right: 3px;
  font-family: "Liberation Sans", sans-serif;
  font-size: 17px;
  letter-spacing: 3.4px;
  color: #f4f4f4;
  position: relative;
  top: -1px;
}
.logo b { font-weight: normal; border-top: 2px solid #d8283e; line-height: 10px; display: inline-block; }
.logo sup { font-size: 8px; letter-spacing: 0; position: absolute; top: -3px; }

/* toolbar */
.toolbar {
  height: 37px;
  flex: none;
  background: #383838;
  display: flex;
  padding-top: 4px;
}
.grip {
  width: 11px;
  height: 32px;
  flex: none;
  background: radial-gradient(circle, #777 0.8px, transparent 1px) center top / 3px 4px repeat-y;
}
.grip.first { width: 9px; background-position: 4px 0; }
.tb-group {
  display: flex;
  align-items: center;
  height: 32px;
  background: #303030;
  flex: none;
}
.tb-group.pad2 { padding-left: 2px; }
.tb-group.grow { flex: 1; background: #353535; padding-left: 5px; }
.tb { width: 31px; height: 32px; flex: none; display: flex; align-items: center; justify-content: center; }
.tb svg { width: 26px; height: 28px; overflow: visible; }
.tb.on { color: #fff; }
.tb.off { color: #737373; }
.tb.dim { color: #c4c4c4; }
.dd { width: 12px; height: 32px; flex: none; position: relative; }
.dd::after {
  content: "";
  position: absolute;
  left: 3px;
  bottom: 6px;
  border: 3px solid transparent;
  border-top: 3px solid #ddd;
  border-bottom: 0;
}
.combo {
  width: 146px;
  height: 28px;
  margin-left: 3px;
  margin-right: 2px;
  flex: none;
  border: 1px solid #5c5c5c;
  background: linear-gradient(#000, #000) left 1px / 129px 1px no-repeat, linear-gradient(#000, #000) left bottom 1px / 129px 1px no-repeat, #303030;
  position: relative;
}
.combo.alt { width: 145px; margin: 0 1px 0 0; }
.combo i {
  position: absolute;
  right: 5px;
  top: 12px;
  border: 3px solid transparent;
  border-top: 3px solid #777;
  border-bottom: 0;
}
.chevrons { color: #ddd; font-size: 12px; margin: -18px 0 0 8px; }

/* workspace */
.workspace { flex: 1; display: flex; min-height: 0; }
.center { width: 1886px; flex: none; display: flex; flex-direction: column; }
.upper { height: 767px; flex: none; display: flex; }

.left { width: 200px; flex: none; display: flex; flex-direction: column; }
.dock-head {
  height: 27px;
  flex: none;
  display: flex;
  align-items: center;
  padding: 0 5px 0 4px;
}
.tri {
  width: 0;
  height: 0;
  border: 4px solid transparent;
  border-top: 5px solid #bbb;
  border-bottom: 0;
}
.dock-head .tri { margin-left: auto; margin-right: 12px; }
.dock-head .x { font-size: 16px; color: #ccc; margin-right: 0; width: 9px; line-height: 16px; }

.panel {
  flex: 1;
  margin-left: 1px;
  border: 2px solid #141414;
  border-top-width: 3px;
  display: flex;
  flex-direction: column;
  min-height: 0;
}
.panel-title {
  height: 20px;
  flex: none;
  background: #242424;
  font-family: "Liberation Mono", monospace;
  font-size: 11px;
  line-height: 20px;
  text-align: center;
  color: #f0f0f0;
}
.panel-body {
  flex: 1;
  min-height: 0;
  background: #3c3c3c;
  padding: 4px 2px 7px 3px;
  display: flex;
  flex-direction: column;
}
.panel-tabs { height: 23px; flex: none; display: flex; background: #262626; }
.ptab { display: flex; align-items: center; padding: 0 7px 0 6px; gap: 8px; }
.ptab svg { width: 18px; height: 18px; }
.ptab.active { background: #3e3e3e; width: 55px; color: #0a9cf0; }
.ptab + .ptab { padding-left: 6px; }

.tree {
  flex: 1;
  min-height: 0;
  margin: 0 6px 0 4px;
  background: #2e2e2e;
  position: relative;
  overflow: hidden;
  font-size: 12.5px;
}
.tree-lines { position: absolute; left: 0; top: 0; }
.node {
  height: 20px;
  display: flex;
  align-items: center;
  position: relative;
  white-space: nowrap;
}
.node.l0 { padding-left: 7px; }
.node.l1 { padding-left: 30px; }
.node.l2 { padding-left: 53px; }
.node.l3 { padding-left: 97px; }
.node.l3.cache { padding-left: 95px; }
.toggle {
  width: 10px;
  height: 10px;
  margin-right: 9px;
  flex: none;
  background: #f0f0f4;
  border: 1px solid #9a9a9a;
  color: #1a2f80;
  font-size: 11px;
  font-weight: bold;
  line-height: 7px;
  text-align: center;
}
.toggle.none { background: none; border: 0; }
.fold { width: 18px; height: 18px; flex: none; margin-right: 7px; }
.file { width: 14px; height: 18px; flex: none; margin-right: 8px; }
.l2 .file { width: 16px; margin: 0 4px 0 1px; }
.node.l3.cache .fold { margin-right: 6px; }
.sel { background: #555; line-height: 20px; padding-left: 3px; width: 86px; overflow: hidden; flex: none; }

.hbar { flex: none; position: relative; background: #444; }
.tree-bar { height: 17px; margin: 0 6px 0 4px; border: 1px solid #3c3c3c; }
.tree-bar .thumb { position: absolute; left: 16px; top: 4px; width: 85px; height: 7px; background: #2e2e2e; }
.arr-l, .arr-r { position: absolute; top: 4px; width: 0; height: 0; border: 4px solid transparent; }
.arr-l { left: 2px; border-right: 4px solid #ccc; border-left: 0; }
.arr-r { right: 2px; border-left: 4px solid #ccc; border-right: 0; }

/* document area */
.docs { flex: 1; min-width: 0; display: flex; flex-direction: column; padding-right: 6px; }
.doc-tabs {
  height: 27px;
  flex: none;
  display: flex;
  padding: 4px 1px 2px 8px;
  font-size: 12.6px;
  line-height: 20px;
}
.dtab { height: 21px; flex: none; display: flex; position: relative; color: #dcdcdc; white-space: nowrap; }
.dtab em { position: absolute; top: 0; font-size: 15px; color: #ccc; }
.dtab.first {
  width: 192px;
  padding-left: 38px;
  background: #323232;
  clip-path: polygon(18px 0, 100% 0, 100% 100%, 0 100%);
}
.dtab.first em { left: 175px; }
.dtab.second { width: 210px; padding-left: 22px; border-left: 1px solid #2a2a2a; background: #323232; }
.dtab.second em { left: 194px; }
.dtab.third { width: 187px; padding-left: 22px; border-left: 1px solid #2a2a2a; background: #323232; }
.dtab.third em { left: 180px; }
.dtab.active {
  width: 179px;
  margin-left: -18px;
  padding-left: 35px;
  background: #484848;
  color: #0a9cf0;
  font-weight: 500;
  clip-path: polygon(19px 0, 100% 0, 100% 100%, 0 100%);
}
.dtab.active em { left: 164px; color: #eee; }
.doc-tabs .right { margin: 8px 0 0 auto; }

.frame {
  flex: 1;
  min-height: 0;
  margin: 0 0 5px 11px;
  display: flex;
  border-top: 2px solid #a8a8a8;
  border-left: 2px solid #a8a8a8;
  border-right: 2px solid #f2f2f2;
  border-bottom: 2px solid #f2f2f2;
  background: #232423;
}
.editor { width: 1160px; flex: none; display: flex; flex-direction: column; }
.canvas-row { height: 664px; flex: none; display: flex; background: #444; padding: 1px 0 0 3px; }
.canvas { display: block; flex: none; }
.vbar { width: 17px; flex: none; position: relative; }
.vbar i { width: 9px; height: 9px; margin: 41px 0 0 4px; background: #333; }
.canvas-bar { height: 18px; }
.canvas-bar .thumb { position: absolute; left: 56px; top: 4px; width: 17px; height: 8px; background: #333; }

.view-tabs {
  height: 25px;
  flex: none;
  display: flex;
  padding-left: 4px;
  border-bottom: 1px solid #3e3e3e;
  line-height: 20px;
}
.vtab { height: 18px; margin: 1px 2px 0 0; padding: 0 4px; line-height: 17px; border: 1px solid #3a3a3a; color: #e4e4e4; font-size: 11.5px; }
.vtab.active { height: 25px; margin-top: 0; width: 61px; padding: 2px 0 0 8px; background: #232423; border-width: 0 1px 1px 0; }
.status { margin-left: auto; display: flex; gap: 16px; padding: 2px 30px 0 0; font-size: 11.5px; }
.status span:first-child { margin-right: 11px; }
.pages { flex: 1; padding-left: 4px; }
.page { display: block; width: 25px; height: 21px; line-height: 20px; padding-left: 8px; margin-top: -1px; border: 1px solid #3e3e3e; border-top: 0; background: #232423; font-size: 11.5px; }

/* property sheet */
.props { flex: 1; min-width: 0; display: flex; flex-direction: column; border-left: 1px solid #444; }
.props-head { height: 21px; flex: none; border-bottom: 2px solid #444; padding: 3px 0 0 4px; }
.props-head svg { width: 12px; height: 12px; display: block; }
.props-body { flex: 1; min-height: 0; display: flex; }
.props-main { width: 480px; flex: none; border-right: 1px solid #444; padding-top: 5px; }
.side-tab { flex: 1; padding-top: 10px; }
.side-tab span {
  display: block;
  height: 98px;
  width: 21px;
  border-top: 1px solid #ccc;
  border-bottom: 1px solid #ccc;
  writing-mode: vertical-rl;
  text-align: center;
  font-weight: 700;
  font-size: 11.5px;
  line-height: 21px;
  color: #eee;
}

.sect {
  height: 20px;
  padding-left: 20px;
  display: flex;
  align-items: center;
  font-weight: 700;
  font-size: 11.6px;
  color: #eee;
  position: relative;
}
.sect.second { margin-top: 6px; }
.sect-tri {
  position: absolute;
  left: 7px;
  top: 11px;
  border: 4px solid transparent;
  border-top: 5px solid #bbb;
  border-bottom: 0;
}
.row { height: 18px; margin-top: 6px; padding-left: 21px; display: flex; align-items: center; font-size: 11.5px; }
.row.first, .row.name-row { margin-top: 2px; }
.row.gap5 { margin-top: 5px; }
.row.gap7 { margin-top: 7px; }
.row.gap8 { margin-top: 8px; }
.row label { width: 156px; flex: none; }
.row.btn-row { height: 22px; margin-top: 6px; }
.row.btn-row.gap7 { margin-top: 7px; }
.row.check { height: 15px; }

.field {
  height: 18px;
  flex: none;
  background: #575757;
  line-height: 17px;
  padding-left: 2px;
  color: #eee;
  border: 1px solid #4d4d4d;
  white-space: nowrap;
}
.field.full { width: 280px; }
.field.wide { width: 260px; }
.field.short { width: 218px; }
.field.path { width: 230px; }
.field.italic { font-style: italic; }
.field.select { background: #303030; border-color: #444; position: relative; }
.field.select i {
  position: absolute;
  right: 9px;
  top: 6px;
  border: 4px solid transparent;
  border-top: 4px solid #a8b6d0;
  border-bottom: 0;
}
.bag { width: 16px; height: 14px; margin-left: 2px; flex: none; }
.eye { width: 14px; height: 11px; margin-left: 3px; flex: none; }
.browse { width: 13px; height: 12px; margin-left: 14px; flex: none; }
.box { width: 15px; height: 15px; background: #575757; flex: none; display: block; }
.box svg { display: block; }
.focus { width: 12px; height: 12px; display: block; margin: 12px 0 0 31px; }

.btn {
  height: 22px;
  padding: 0 7px;
  font: inherit;
  font-size: 11.5px;
  color: #eee;
  background: #282828;
  border: 1px solid #444;
  border-radius: 1px;
  white-space: nowrap;
}
.btn:disabled { color: #6a6a6a; background: #2e2e2e; border-color: #2e2e2e; }
.btn.tall { height: 24px; }
.btn.apply { width: 48px; margin-left: 11px; padding: 0; }
.btn.update { width: 56px; margin-left: 241px; padding: 0; }
.actions { display: flex; flex-direction: column; align-items: center; gap: 7px; margin: 7px 0 0 3px; }
.actions.lower { gap: 6px; margin-top: 11px; }
.sep { height: 1px; border: 0; margin: 15px 0 0 7px; width: 454px; background: #444; }
.sep.low { margin-top: 18px; }
.sep.end { margin-top: 8px; width: 463px; }

/* canvas text */
.sym-text { font-family: "Liberation Sans", sans-serif; font-size: 82px; fill: #000; }

.svg-num { font-family: "Liberation Sans", sans-serif; font-size: 8px; font-weight: bold; fill: #737373; }
.svg-big { font-family: "Liberation Sans", sans-serif; font-size: 19px; font-weight: bold; fill: #303030; }
.svg-big.small { fill: #737373; font-size: 13px; }
.svg-badge { font-family: "Liberation Sans", sans-serif; font-size: 11px; font-weight: bold; fill: #2e2e2e; text-anchor: middle; }
.svg-tag { font-family: "Liberation Mono", monospace; font-size: 8.5px; font-weight: bold; fill: #737373; text-anchor: middle; }

/* session log */
.session { flex: 1; display: flex; flex-direction: column; min-height: 0; }
.session-head { height: 33px; flex: none; display: flex; align-items: center; padding: 3px 8px 0 4px; }
.session-head .tri { margin-left: auto; margin-right: 12px; }
.session-head .x { font-size: 16px; line-height: 16px; width: 9px; color: #ccc; }
.log-frame {
  height: 98px;
  flex: none;
  display: flex;
  flex-direction: column;
  border-top: 2px solid #888;
  border-left: 1px solid #777;
  border-right: 2px solid #f2f2f2;
  border-bottom: 2px solid #f2f2f2;
  background: #323232;
}
.log-main { flex: 1; min-height: 0; display: flex; }
.log-text {
  flex: 1;
  padding: 1px 0 0 10px;
  font-family: "Liberation Sans", sans-serif;
  font-size: 13.33px;
  line-height: 16px;
  color: #eee;
}
.log-vbar { width: 17px; flex: none; background: #444; position: relative; }
.log-vbar .thumb { position: absolute; left: 5px; top: 52px; width: 7px; height: 6px; background: #333; }
.arr-u, .arr-d { position: absolute; left: 4px; width: 0; height: 0; border: 4px solid transparent; }
.arr-u { top: 7px; border-bottom: 5px solid #bbb; border-top: 0; }
.arr-d { bottom: 11px; border-top: 5px solid #bbb; border-bottom: 0; }
.log-hbar { height: 18px; flex: none; background: #444; position: relative; }
.log-hbar .thumb { position: absolute; left: 19px; top: 5px; width: 15px; height: 7px; background: #333; }
.log-hbar .arr-l { top: 5px; left: 4px; }
.log-hbar .arr-r { top: 5px; right: 22px; }
.corner { position: absolute; right: 0; top: 0; width: 17px; height: 16px; background: #2a2a2a; }

.session-tabs { flex: 1; display: flex; gap: 6px; padding: 1px 0 0 6px; }
.stab { line-height: 22px; font-size: 12px; }
.stab.active { padding: 0 6px; height: 23px; border: 1px solid #555; border-top: 0; }

/* right dock */
.dock { flex: 1; display: flex; flex-direction: column; padding-top: 3px; }
.vgrip {
  height: 6px;
  flex: none;
  margin-left: 6px;
  background: radial-gradient(circle, #777 0.8px, transparent 1px) left center / 4px 3px repeat-x;
}
.dock-group { background: #333; display: flex; flex-direction: column; height: 695px; padding-top: 0; }
.lower-group { height: 206px; margin-top: 0; padding-top: 0; }
.dk { width: 30px; height: 31px; flex: none; display: flex; align-items: center; justify-content: center; }
.dk svg { width: 25px; height: 25px; overflow: visible; }
.dk.off { color: #737373; }
.dk.picked { background: #111; }
.dk-more { margin: 4px 0 0 5px; width: 0; height: 0; border: 4px solid transparent; border-right: 4px solid #ccc; border-left: 0; }
.dk-foot { display: flex; align-items: center; justify-content: space-between; padding: 8px 3px 0 5px; color: #ddd; font-size: 12px; }
.dk-foot span { transform: rotate(90deg); }
.dk-foot i { width: 0; height: 0; border: 4px solid transparent; border-right: 4px solid #ccc; border-left: 0; }

/* bottom status */
.statusbar {
  height: 12px;
  flex: none;
  background: #555;
  padding: 4px 0 0 6px;
  font-size: 12px;
  line-height: 16px;
  overflow: hidden;
  color: #eee;
}
```
